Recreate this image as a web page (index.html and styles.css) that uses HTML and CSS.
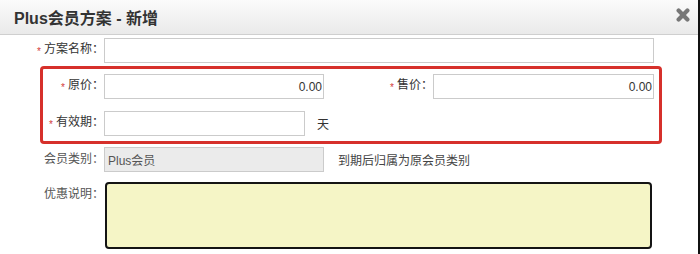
FILE: index.html
```html
<!DOCTYPE html>
<html lang="zh-CN">
<head>
<meta charset="utf-8">
<title>Plus会员方案 - 新增</title>
<link rel="stylesheet" href="styles.css">
</head>
<body>
<div class="dialog">
  <div class="header">
    <span class="title">Plus会员方案 - 新增</span>
    <span class="close" aria-label="关闭">
      <svg width="14" height="14" viewBox="0 0 14 14"><path d="M2.6 2.6L11.4 11.4M11.4 2.6L2.6 11.4" stroke="#777" stroke-width="4.2" stroke-linecap="round"/></svg>
    </span>
  </div>
  <div class="form">
    <div class="row">
      <label class="label"><span class="req">*</span>方案名称：</label>
      <input class="input w-full" type="text">
    </div>
    <div class="row">
      <label class="label"><span class="req">*</span>原价：</label>
      <input class="input num w-price" type="text" value="0.00">
      <label class="label label2"><span class="req">*</span>售价：</label>
      <input class="input num w-price2" type="text" value="0.00">
    </div>
    <div class="row r3">
      <label class="label"><span class="req">*</span>有效期：</label>
      <input class="input w-days" type="text">
      <span class="unit">天</span>
    </div>
    <div class="row r4">
      <label class="label soft">会员类别：</label>
      <input class="input w-price readonly" type="text" value="Plus会员" readonly>
      <span class="note">到期后归属为原会员类别</span>
    </div>
    <div class="row top">
      <label class="label soft tall">优惠说明：</label>
      <textarea class="area"></textarea>
    </div>
    <div class="highlight"></div>
  </div>
</div>
</body>
</html>
```
FILE: styles.css
```css
html, body {
  margin: 0;
  padding: 0;
  background: #fff;
}
body {
  font-family: "Liberation Sans", "Noto Sans CJK SC", sans-serif;
  font-size: 12px;
  color: #333;
}
.dialog {
  width: 700px;
  height: 254px;
  box-sizing: border-box;
  border-right: 2px solid #111;
  overflow: hidden;
}
.header {
  height: 34px;
  border-bottom: 1px solid #cfcfcf;
  background: linear-gradient(#fbfbfb, #eaeaea);
  display: flex;
  align-items: center;
  justify-content: space-between;
  padding: 0 8px 0 14px;
}
.title {
  font-size: 16px;
  font-weight: bold;
  color: #333;
  margin-top: -1px;
}
.close {
  display: flex;
  margin-top: -5px;
}
.form {
  position: relative;
  padding-top: 3px;
  display: flex;
  flex-direction: column;
  gap: 11px;
}
.row {
  display: flex;
  align-items: center;
  height: 25px;
}
.row.r3 { margin-top: 1px; }
.row.r4 { margin-bottom: -1px; }
.row.top {
  align-items: flex-start;
  height: auto;
}
.label {
  width: 104px;
  flex-shrink: 0;
  text-align: right;
  color: #333;
  line-height: 25px;
  white-space: nowrap;
}
.label.soft { color: #555; }
.label2 { width: 109px; }
.req {
  color: #d23a3a;
  font-size: 10px;
  margin-right: 3px;
  vertical-align: -2px;
}
.input {
  box-sizing: border-box;
  height: 25px;
  border: 1px solid #cbcbcb;
  background: #fff;
  font-family: "Liberation Sans", "Noto Sans CJK SC", sans-serif;
  font-size: 12px;
  color: #333;
  padding: 0 3px;
  margin: 0;
  outline: none;
}
.input.num {
  text-align: right;
  padding-right: 1px;
}
.w-full { width: 550px; }
.w-price { width: 220px; }
.w-price2 { width: 221px; }
.w-days { width: 201px; }
.readonly {
  background: #ebebeb;
  color: #555;
}
.unit {
  margin-left: 12px;
  color: #333;
}
.note {
  margin-left: 14px;
  color: #444;
}
.area {
  box-sizing: border-box;
  margin: 0 0 0 1px;
  width: 547px;
  height: 67px;
  border: 2px solid #141414;
  border-radius: 4px;
  background: #f5f5c6;
  resize: none;
  outline: none;
  padding: 2px;
}
.highlight {
  position: absolute;
  left: 40px;
  top: 31px;
  width: 622px;
  height: 78px;
  box-sizing: border-box;
  border: 3px solid #d6302b;
  border-radius: 4px;
  pointer-events: none;
}
```
